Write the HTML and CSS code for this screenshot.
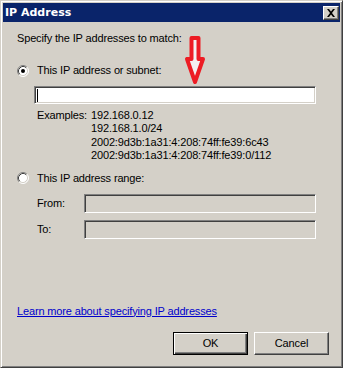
FILE: index.html
```html
<!DOCTYPE html>
<html>
<head>
<meta charset="utf-8">
<title>IP Address</title>
<link rel="stylesheet" href="styles.css">
</head>
<body>
<div class="window">
  <div class="titlebar">
    <span class="title">IP Address</span>
    <div class="close">
      <svg width="10" height="8" viewBox="0 0 10 8"><path d="M1 0h2l2 2.5L7 0h2L6 4l3 4H7L5 5.5 3 8H1l3-4z" fill="#000"/></svg>
    </div>
  </div>
  <div class="content">
    <div class="intro">Specify the IP addresses to match:</div>
    <div class="option first">
      <svg class="radio" width="12" height="12" viewBox="0 0 12 12">
        <circle cx="6" cy="6" r="5" fill="#fff"/>
        <path d="M9.89 2.11A5.5 5.5 0 0 0 2.11 9.89" fill="none" stroke="#808080"/>
        <path d="M2.11 9.89A5.5 5.5 0 0 0 9.89 2.11" fill="none" stroke="#fff"/>
        <path d="M9.18 2.82A4.5 4.5 0 0 0 2.82 9.18" fill="none" stroke="#404040"/>
        <path d="M2.82 9.18A4.5 4.5 0 0 0 9.18 2.82" fill="none" stroke="#d4d0c8"/>
        <circle cx="6" cy="6" r="2" fill="#000"/>
      </svg>
      <span>This IP address or subnet:</span>
    </div>
    <div class="field main"><span class="caret"></span></div>
    <div class="examples">
      <span class="ex-label">Examples:</span>
      <span>192.168.0.12</span>
      <span></span><span>192.168.1.0/24</span>
      <span></span><span>2002:9d3b:1a31:4:208:74ff:fe39:6c43</span>
      <span></span><span>2002:9d3b:1a31:4:208:74ff:fe39:0/112</span>
    </div>
    <div class="option second">
      <svg class="radio" width="12" height="12" viewBox="0 0 12 12">
        <circle cx="6" cy="6" r="5" fill="#fff"/>
        <path d="M9.89 2.11A5.5 5.5 0 0 0 2.11 9.89" fill="none" stroke="#808080"/>
        <path d="M2.11 9.89A5.5 5.5 0 0 0 9.89 2.11" fill="none" stroke="#fff"/>
        <path d="M9.18 2.82A4.5 4.5 0 0 0 2.82 9.18" fill="none" stroke="#404040"/>
        <path d="M2.82 9.18A4.5 4.5 0 0 0 9.18 2.82" fill="none" stroke="#d4d0c8"/>
      </svg>
      <span>This IP address range:</span>
    </div>
    <div class="range from">
      <span class="range-label">From:</span>
      <div class="field disabled"></div>
    </div>
    <div class="range to">
      <span class="range-label">To:</span>
      <div class="field disabled"></div>
    </div>
    <a class="link" href="#">Learn more about specifying IP addresses</a>
    <div class="buttons">
      <div class="btn default">OK</div>
      <div class="btn">Cancel</div>
    </div>
  </div>
  <svg class="arrow" width="24" height="52" viewBox="0 0 24 52">
    <path d="M8.5 4H15.5V25H20L12 48L4 25H8.5Z" fill="#f4f0f0" stroke="#ed1c24" stroke-width="4" stroke-linejoin="round"/>
  </svg>
</div>
</body>
</html>
```

FILE: styles.css
```css
html, body {
  margin: 0;
  padding: 0;
  background: #d4d0c8;
}

.window {
  position: relative;
  width: 343px;
  height: 368px;
  box-sizing: border-box;
  background: #d4d0c8;
  border: 1px solid;
  border-color: #d4d0c8 #404040 #404040 #d4d0c8;
  box-shadow: inset 1px 1px 0 #ffffff, inset -1px -1px 0 #808080;
  padding: 2px;
  font-family: "Liberation Sans", Arial, sans-serif;
  font-size: 11px;
  line-height: 13px;
  letter-spacing: -0.15px;
  color: #000;
  display: flex;
  flex-direction: column;
}

.titlebar {
  height: 19px;
  background: #0a246a;
  display: flex;
  align-items: center;
  justify-content: space-between;
  padding-left: 2px;
}

.title {
  color: #fff;
  font-family: "DejaVu Sans", "Liberation Sans", sans-serif;
  font-weight: 700;
  font-size: 11px;
  letter-spacing: 0;
}

.close {
  width: 16px;
  height: 14px;
  box-sizing: border-box;
  margin-right: 1px;
  background: #d4d0c8;
  border: 1px solid;
  border-color: #ffffff #404040 #404040 #ffffff;
  box-shadow: inset -1px -1px 0 #808080;
  display: flex;
  align-items: center;
  justify-content: center;
  padding-right: 1px;
}

.close svg {
  display: block;
}

.content {
  display: flex;
  flex-direction: column;
  padding-left: 14px;
}

.intro {
  margin-top: 10px;
}

.option {
  display: flex;
  align-items: center;
  gap: 8px;
  height: 13px;
}

.option.first {
  margin-top: 19px;
}

.option.second {
  margin-top: 9px;
}

.radio {
  display: block;
  flex: none;
}

.field {
  box-sizing: border-box;
  border: 1px solid;
  border-color: #808080 #ffffff #ffffff #808080;
  box-shadow: inset 1px 1px 0 #404040, inset -1px -1px 0 #d4d0c8;
}

.field.main {
  margin-top: 9px;
  margin-left: 17px;
  width: 282px;
  height: 18px;
  background: #fff;
  display: flex;
  align-items: center;
  padding-left: 2px;
}

.caret {
  width: 1px;
  height: 13px;
  background: #000;
}

.examples {
  margin-top: 5px;
  margin-left: 20px;
  display: grid;
  grid-template-columns: 54px auto;
  line-height: 13.4px;
}

.range {
  display: flex;
  align-items: center;
  height: 19px;
  margin-left: 20px;
}

.range.from {
  margin-top: 9px;
}

.range.to {
  margin-top: 7px;
}

.range-label {
  width: 47px;
}

.field.disabled {
  width: 232px;
  height: 19px;
  background: #d4d0c8;
}

.link {
  margin-top: 66px;
  color: #0000cc;
  text-decoration: underline;
  align-self: flex-start;
}

.buttons {
  margin-top: 14px;
  margin-right: 11px;
  display: flex;
  justify-content: flex-end;
  gap: 6px;
}

.btn {
  width: 75px;
  height: 23px;
  box-sizing: border-box;
  border: 1px solid;
  border-color: #ffffff #404040 #404040 #ffffff;
  box-shadow: inset -1px -1px 0 #808080;
  display: flex;
  align-items: center;
  justify-content: center;
}

.btn.default {
  border-color: #000;
  box-shadow: inset 1px 1px 0 #ffffff, inset -1px -1px 0 #404040, inset -2px -2px 0 #808080;
}

.arrow {
  position: absolute;
  left: 182px;
  top: 33px;
}
```
